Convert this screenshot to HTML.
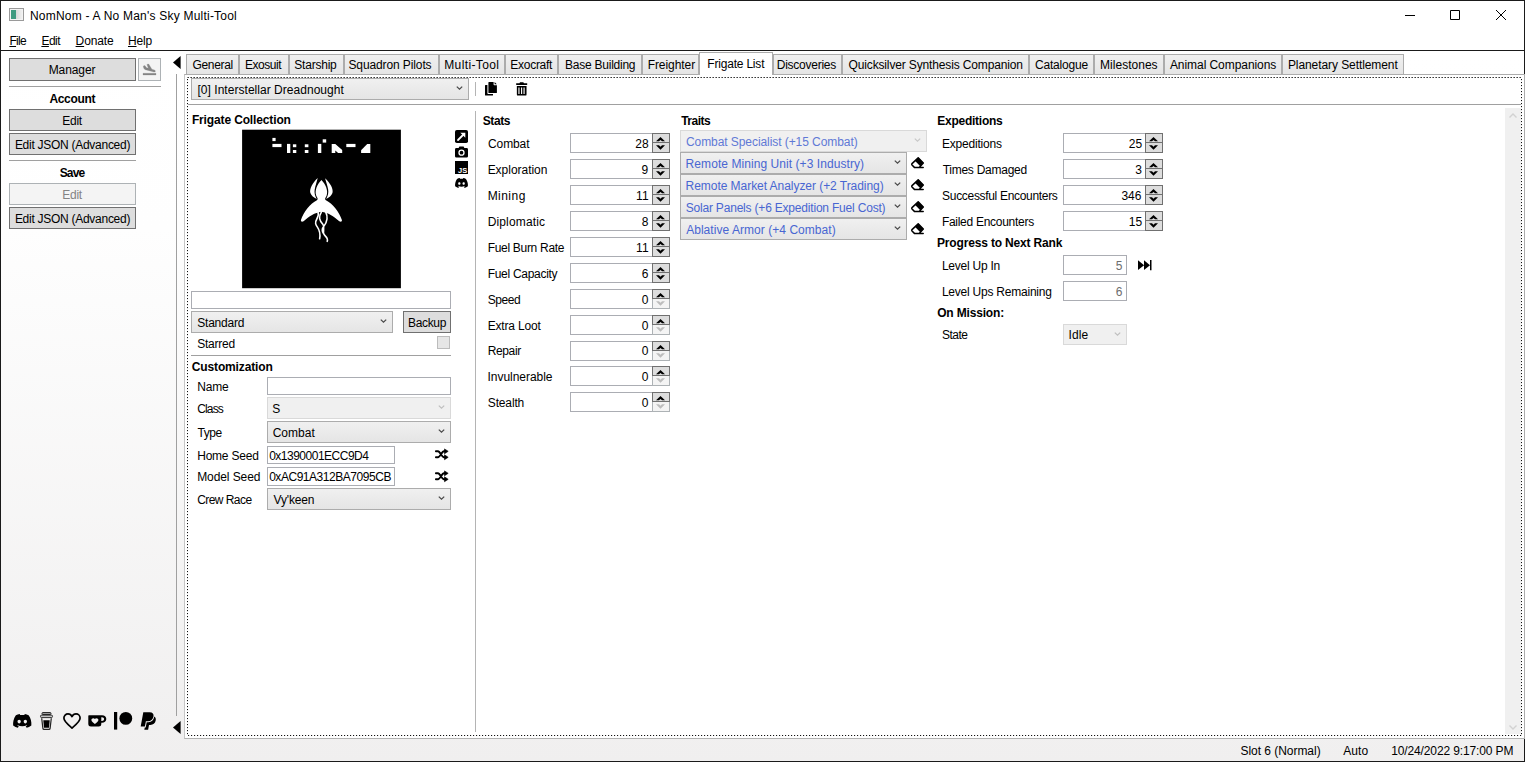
<!DOCTYPE html>
<html lang="en"><head><meta charset="utf-8"><title>NomNom - A No Man's Sky Multi-Tool</title>
<style>
html,body{margin:0;padding:0;}
body{width:1525px;height:762px;overflow:hidden;background:#fff;font-family:"Liberation Sans",sans-serif;font-size:12px;color:#000;}
#win{position:relative;width:1525px;height:762px;overflow:hidden;background:#fff;}
#win *{box-sizing:border-box;}
.a{position:absolute;}
.t{position:absolute;white-space:nowrap;line-height:14px;}
.t u{text-decoration:underline;text-underline-offset:1px;}
#bg{left:1px;top:51px;width:1523px;height:710px;background:linear-gradient(#fff 0%,#fefefe 25%,#f0efef 100%);}
.btn{position:absolute;background:#ddd;border:1px solid #707070;}
.btn.dis{background:#f4f4f4;border-color:#adb2b5;}
.cb{position:absolute;background:linear-gradient(#f0f0f0,#e5e5e5);border:1px solid #acacac;}
.cb.dis{background:#f0f0f0;border-color:#d9d9d9;}
.tb{position:absolute;background:#fff;border:1px solid #abadb3;}
.tab{position:absolute;top:54px;height:20px;background:linear-gradient(#f0f0f0,#e5e5e5);border:1px solid #acacac;border-bottom:none;}
.tab.sel{top:52px;height:23px;background:#fff;}
.hl{position:absolute;height:1px;background:#a0a0a0;}
.vl{position:absolute;width:1px;background:#a0a0a0;}
.sp{position:absolute;width:100px;height:20px;background:#fff;border:1px solid #abadb3;}
.sp i{position:absolute;right:-1px;width:18px;height:10px;background:#ddd;border:1px solid #707070;}
.sp i.u{top:-1px;}
.sp i.d{top:9px;border-top:none;}
.sp i.d.dis{background:#f4f4f4;border-color:#adb2b5;}
svg{position:absolute;overflow:visible;}
.dh{position:absolute;height:1px;background-image:linear-gradient(90deg,transparent 0,transparent 1px,#111 1px,#111 2px,rgba(0,0,0,.12) 2px,rgba(0,0,0,.12) 3px);background-size:3px 1px;}
.dh.top{background-image:linear-gradient(90deg,#8a8a8a 0,#8a8a8a 1px,#3a3a3a 1px,#3a3a3a 2px,transparent 2px,transparent 3px);}
.dv{position:absolute;width:1px;background-image:linear-gradient(180deg,transparent 0,transparent 1px,#111 1px,#111 2px,rgba(0,0,0,.12) 2px,rgba(0,0,0,.12) 3px);background-size:1px 3px;}

</style></head>
<body>
<div id="win">
<!-- window frame / chrome -->
<div class="a" id="bg"></div>
<div class="a" style="left:0;top:0;width:1525px;height:1px;background:#1a1a1a"></div>
<div class="a" style="left:0;top:0;width:1px;height:762px;background:#1a1a1a"></div>
<div class="a" style="left:1524px;top:0;width:1px;height:762px;background:#1a1a1a"></div>
<div class="a" style="left:0;top:761px;width:1525px;height:1px;background:#1a1a1a"></div>
<div class="a" style="left:0;top:50px;width:1525px;height:1px;background:#1a1a1a"></div>
<div class="a" style="left:9px;top:8px;width:15px;height:13px;border:1px solid #9a9a9a;background:linear-gradient(90deg,#3f9a80 0,#3f9a80 6px,#d8d8d8 6px,#f4f4f4 100%);box-shadow:inset 0 0 0 1px #f3f3f3"></div>
<svg style="left:1404px;top:10px" width="104" height="11" viewBox="0 0 104 11"><path d="M1 5.5H11M46.5 0.5H55.5V9.5H46.5ZM92 0L102 10M102 0L92 10" fill="none" stroke="#000" stroke-width="1"/></svg>
<!-- sidebar -->
<div class="btn" style="left:9px;top:58px;width:127px;height:23px;"></div>
<div class="btn dis" style="left:138px;top:58px;width:23px;height:23px;"></div>
<svg style="left:143px;top:64px" width="13" height="11" viewBox="0 0 13 11"><path d="M0.3 2 L1.9 1.6 L3.3 3.6 L5.4 4.2 L3.9 0.4 L5.7 0 L8.9 5.2 L11.3 5.9 C13 6.5 12.6 8.3 10.9 8 L2.4 5.7 C1.2 5.3 0.5 4.3 0.3 2Z M0 9.3H13V11H0Z" fill="#858585" stroke="#858585" stroke-width="0.25" stroke-linejoin="round"/></svg>
<div class="hl" style="left:9px;top:86px;width:152px"></div>
<div class="btn" style="left:9px;top:109px;width:127px;height:22px;"></div>
<div class="btn" style="left:9px;top:133px;width:127px;height:22px;"></div>
<div class="hl" style="left:9px;top:160px;width:127px"></div>
<div class="btn dis" style="left:9px;top:183px;width:127px;height:22px;"></div>
<div class="btn" style="left:9px;top:207px;width:127px;height:22px;"></div>
<svg style="left:173px;top:56px" width="8" height="13" viewBox="0 0 8 13"><path d="M0 6.5L7.6 0V13Z" fill="#000"/></svg>
<svg style="left:173px;top:721px" width="8" height="13" viewBox="0 0 8 13"><path d="M0 6.5L7.6 0V13Z" fill="#000"/></svg>
<div class="vl" style="left:176px;top:74px;height:642px"></div>
<!-- tab strip -->
<div class="a" style="left:184px;top:74px;width:1341px;height:665px;background:#fff;border:1px solid #acacac;border-left-color:#c6c6c6;border-bottom-color:#b2b2b2"></div>
<div class="tab" style="left:186px;width:53px"></div>
<div class="tab" style="left:239px;width:50px"></div>
<div class="tab" style="left:289px;width:55px"></div>
<div class="tab" style="left:344px;width:95px"></div>
<div class="tab" style="left:439px;width:66px"></div>
<div class="tab" style="left:505px;width:53px"></div>
<div class="tab" style="left:558px;width:84px"></div>
<div class="tab" style="left:642px;width:57px"></div>
<div class="tab" style="left:773px;width:69px"></div>
<div class="tab" style="left:842px;width:187px"></div>
<div class="tab" style="left:1029px;width:65px"></div>
<div class="tab" style="left:1094px;width:70px"></div>
<div class="tab" style="left:1164px;width:118px"></div>
<div class="tab" style="left:1282px;width:122px"></div>
<div class="tab sel" style="left:699px;width:74px"></div>
<div class="dh top" style="left:187px;top:77px;width:1335px"></div>
<div class="dh" style="left:187px;top:735px;width:1335px"></div>
<div class="dv" style="left:187px;top:78px;height:657px"></div>
<div class="dv" style="left:1521px;top:78px;height:657px"></div>
<!-- toolbar -->
<div class="cb" style="left:191px;top:78px;width:278px;height:22px;"><svg style="left:263.9px;top:7.10px" width="7" height="4" viewBox="0 0 7 4"><path d="M0.8 0.6 L3.5 3.2 L6.2 0.6" fill="none" stroke="#484848" stroke-width="1.25"/></svg></div>
<div class="vl" style="left:475px;top:82px;height:14px;background:#b4b4b4"></div>
<svg style="left:485px;top:82px" width="12" height="14" viewBox="0 0 12 14"><path d="M0 3.6 Q0 3 0.6 3 H2.4 V11.2 Q2.4 12 3.2 12 H8 V13 Q8 13.6 7.4 13.6 H0.6 Q0 13.6 0 13Z" fill="#000"/><path d="M3.4 0.6 Q3.4 0 4 0 H8.6 V2.6 Q8.6 3.3 9.3 3.3 H11.9 V10.4 Q11.9 11 11.3 11 H4 Q3.4 11 3.4 10.4Z M9.6 0.1 L11.8 2.3 H9.6Z" fill="#000"/></svg>
<svg style="left:515.6px;top:82px" width="11.4" height="14" viewBox="0 0 12 14" preserveAspectRatio="none"><path d="M0.2 1.2 H3.6 L4.3 0.2 H7.7 L8.4 1.2 H11.8 V2.9 H0.2Z" fill="#000"/><path fill-rule="evenodd" d="M0.9 3.9 H11.1 V12.4 Q11.1 13.6 9.9 13.6 H2.1 Q0.9 13.6 0.9 12.4Z M2.5 5.4 V11.9 H3.7 V5.4Z M5.3 5.4 V11.9 H6.5 V5.4Z M7.9 5.4 V11.9 H9.1 V5.4Z" fill="#000"/></svg>
<div class="hl" style="left:188px;top:104px;width:1333px"></div>
<div class="a" style="left:1505px;top:108px;width:16px;height:626px;background:#f0f0f0"></div>
<svg style="left:1509px;top:113px" width="8" height="5" viewBox="0 0 8 5"><path d="M0.5 4.5L4 1L7.5 4.5" fill="none" stroke="#d2d2d2" stroke-width="1.4"/></svg>
<svg style="left:1509px;top:725px" width="8" height="5" viewBox="0 0 8 5"><path d="M0.5 0.5L4 4L7.5 0.5" fill="none" stroke="#d2d2d2" stroke-width="1.4"/></svg>
<!-- frigate collection column -->
<svg style="left:242px;top:129px" width="160" height="160" viewBox="0 0 160 160"><rect x="0.1" y="0.7" width="158.8" height="158.5" fill="#000"/><g fill="#fff" transform="translate(0,1)"><rect x="30.4" y="7.9" width="3.2" height="3.2"/><rect x="30.4" y="13.9" width="9.1" height="3.2"/><rect x="45" y="13.9" width="3.3" height="9.1"/><rect x="50.9" y="14.3" width="3.4" height="2.9"/><rect x="50.9" y="20" width="3.4" height="3"/><rect x="62.8" y="14.3" width="3.6" height="2.9"/><rect x="62.8" y="20" width="3.6" height="3"/><rect x="75.9" y="13.9" width="3.4" height="9.1"/><rect x="80.7" y="9.3" width="3.5" height="3.3"/><path d="M89.7 13.9H93.3L100.2 19.9V23H96.1L93.3 20.4V23H89.7Z"/><rect x="104.3" y="13.9" width="9.2" height="3.2"/><path d="M119.1 23H128.3V13.9H125.2L119.1 20.3Z"/></g></svg>
<svg style="left:281px;top:170px" width="80" height="80" viewBox="0 0 762 762"><path d="M385 96 C345 135 318 200 336 245 C344 264 358 276 342 288 C280 318 215 400 190 476 C187 492 200 496 215 488 C270 440 320 408 385 398 C450 408 500 440 555 488 C570 496 583 492 580 476 C555 400 490 318 428 288 C412 276 426 264 434 245 C452 200 425 135 385 96Z" fill="#fff"/><path d="M350 76 C302 122 268 180 280 220 C288 246 312 262 340 276 C322 244 316 215 321 185 C327 150 340 115 350 76Z M420 78 C468 122 502 180 490 220 C482 246 458 262 430 276 C448 244 454 215 449 185 C443 150 430 115 420 78Z" fill="#fff"/><path d="M352 398 C372 450 322 470 330 510 C338 550 385 560 368 655 M385 398 C355 450 365 480 400 520 C425 550 385 590 415 620 C440 645 450 660 440 680 M425 398 C452 450 445 490 405 540 C385 565 395 590 405 605" fill="none" stroke="#fff" stroke-width="15" stroke-linecap="round"/></svg>
<svg style="left:455px;top:130px" width="13" height="13" viewBox="0 0 13 13"><rect width="13" height="13" rx="1.8" fill="#000"/><path d="M3 10 L8 5" fill="none" stroke="#fff" stroke-width="1.8" stroke-linecap="round"/><path d="M5.3 2.7 H10.3 V7.7Z" fill="#fff"/></svg>
<svg style="left:455px;top:146px" width="13" height="12" viewBox="0 0 13 12"><path d="M1.4 2H3.6L4.4 0.5H8.6L9.4 2H11.6Q13 2 13 3.4V10.2Q13 11.6 11.6 11.6H1.4Q0 11.6 0 10.2V3.4Q0 2 1.4 2Z" fill="#000"/><circle cx="6.5" cy="6.7" r="2.5" fill="none" stroke="#fff" stroke-width="1.3"/></svg>
<svg style="left:455px;top:161px" width="13" height="13" viewBox="0 0 13 13"><rect width="13" height="13" fill="#000"/><text x="12.3" y="11.6" text-anchor="end" font-family="Liberation Sans, sans-serif" font-size="7.5" font-weight="bold" fill="#fff">JS</text></svg>
<svg style="left:455px;top:178px" width="13" height="10" viewBox="0 0 18 14" preserveAspectRatio="none"><path fill-rule="evenodd" d="M15.2 1.3 C14 0.75 12.8 0.35 11.5 0.1 C11.35 0.4 11.15 0.8 11.05 1.1 C9.7 0.9 8.3 0.9 6.95 1.1 C6.85 0.8 6.65 0.4 6.5 0.1 C5.2 0.35 4 0.75 2.8 1.3 C0.5 4.8 -0.15 8.2 0.15 11.55 C1.7 12.7 3.2 13.4 4.7 13.85 C5.05 13.35 5.4 12.8 5.65 12.25 C5.1 12.05 4.6 11.8 4.1 11.5 C4.25 11.4 4.35 11.3 4.5 11.2 C7.4 12.55 10.6 12.55 13.5 11.2 C13.65 11.3 13.75 11.4 13.9 11.5 C13.4 11.8 12.9 12.05 12.35 12.25 C12.6 12.8 12.95 13.35 13.3 13.85 C14.8 13.4 16.3 12.7 17.85 11.55 C18.2 7.65 17.25 4.3 15.2 1.3Z M6 9.4 C5.1 9.4 4.4 8.6 4.4 7.6 C4.4 6.6 5.1 5.8 6 5.8 C6.9 5.8 7.65 6.6 7.6 7.6 C7.6 8.6 6.9 9.4 6 9.4Z M12 9.4 C11.1 9.4 10.4 8.6 10.4 7.6 C10.4 6.6 11.1 5.8 12 5.8 C12.9 5.8 13.65 6.6 13.6 7.6 C13.6 8.6 12.9 9.4 12 9.4Z" fill="#000"/></svg>
<div class="tb" style="left:191px;top:291px;width:260px;height:18px;"></div>
<div class="cb" style="left:191px;top:311px;width:202px;height:22px;"><svg style="left:187.9px;top:7.10px" width="7" height="4" viewBox="0 0 7 4"><path d="M0.8 0.6 L3.5 3.2 L6.2 0.6" fill="none" stroke="#484848" stroke-width="1.25"/></svg></div>
<div class="btn" style="left:403px;top:311px;width:48px;height:22px;"></div>
<div class="a" style="left:437px;top:336px;width:13px;height:13px;background:#e6e6e6;border:1px solid #bcbcbc"></div>
<div class="hl" style="left:191px;top:355px;width:260px"></div>
<div class="tb" style="left:267px;top:377px;width:184px;height:18px;"></div>
<div class="cb dis" style="left:267px;top:397px;width:184px;height:22px;"><svg style="left:169.9px;top:7.10px" width="7" height="4" viewBox="0 0 7 4"><path d="M0.8 0.6 L3.5 3.2 L6.2 0.6" fill="none" stroke="#bfbfbf" stroke-width="1.25"/></svg></div>
<div class="cb" style="left:267px;top:421px;width:184px;height:22px;"><svg style="left:169.9px;top:7.10px" width="7" height="4" viewBox="0 0 7 4"><path d="M0.8 0.6 L3.5 3.2 L6.2 0.6" fill="none" stroke="#484848" stroke-width="1.25"/></svg></div>
<div class="tb" style="left:267px;top:446px;width:128px;height:18px;"></div>
<div class="tb" style="left:267px;top:467px;width:128px;height:19px;"></div>
<div class="cb" style="left:267px;top:488px;width:184px;height:22px;"><svg style="left:169.9px;top:7.10px" width="7" height="4" viewBox="0 0 7 4"><path d="M0.8 0.6 L3.5 3.2 L6.2 0.6" fill="none" stroke="#484848" stroke-width="1.25"/></svg></div>
<svg style="left:435px;top:449.3px" width="13.5" height="10.5" viewBox="0 0 13.5 10.5"><path d="M0.9 2.3 H3 C5 2.3 6.9 8.3 8.9 8.3 H10 M0.9 8.3 H3 C5 8.3 6.9 2.3 8.9 2.3 H10" fill="none" stroke="#000" stroke-width="1.9" stroke-linecap="round"/><path d="M9.5 -0.1 L13.2 2.3 L9.5 4.8Z M9.5 5.8 L13.2 8.3 L9.5 10.7Z" fill="#000" stroke="#000" stroke-width="0.6" stroke-linejoin="round"/></svg>
<svg style="left:435px;top:471.3px" width="13.5" height="10.5" viewBox="0 0 13.5 10.5"><path d="M0.9 2.3 H3 C5 2.3 6.9 8.3 8.9 8.3 H10 M0.9 8.3 H3 C5 8.3 6.9 2.3 8.9 2.3 H10" fill="none" stroke="#000" stroke-width="1.9" stroke-linecap="round"/><path d="M9.5 -0.1 L13.2 2.3 L9.5 4.8Z M9.5 5.8 L13.2 8.3 L9.5 10.7Z" fill="#000" stroke="#000" stroke-width="0.6" stroke-linejoin="round"/></svg>
<div class="vl" style="left:475px;top:111px;height:621px;background:#b4b4b4"></div>
<!-- stats spinners -->
<div class="sp" style="left:570px;top:133px"><i class="u"><svg style="left:3px;top:3px" width="9" height="5" viewBox="0 0 9 5"><path d="M0 4.3 L4.5 0 L9 4.3 H6 L4.5 2.9 L3 4.3Z" fill="#000"/></svg></i><i class="d"><svg style="left:3px;top:2px" width="9" height="5" viewBox="0 0 9 5"><path d="M0 0.2 L4.5 4.8 L9 0.2 H6 L4.5 1.8 L3 0.2Z" fill="#000"/></svg></i></div>
<div class="sp" style="left:570px;top:159px"><i class="u"><svg style="left:3px;top:3px" width="9" height="5" viewBox="0 0 9 5"><path d="M0 4.3 L4.5 0 L9 4.3 H6 L4.5 2.9 L3 4.3Z" fill="#000"/></svg></i><i class="d"><svg style="left:3px;top:2px" width="9" height="5" viewBox="0 0 9 5"><path d="M0 0.2 L4.5 4.8 L9 0.2 H6 L4.5 1.8 L3 0.2Z" fill="#000"/></svg></i></div>
<div class="sp" style="left:570px;top:185px"><i class="u"><svg style="left:3px;top:3px" width="9" height="5" viewBox="0 0 9 5"><path d="M0 4.3 L4.5 0 L9 4.3 H6 L4.5 2.9 L3 4.3Z" fill="#000"/></svg></i><i class="d"><svg style="left:3px;top:2px" width="9" height="5" viewBox="0 0 9 5"><path d="M0 0.2 L4.5 4.8 L9 0.2 H6 L4.5 1.8 L3 0.2Z" fill="#000"/></svg></i></div>
<div class="sp" style="left:570px;top:211px"><i class="u"><svg style="left:3px;top:3px" width="9" height="5" viewBox="0 0 9 5"><path d="M0 4.3 L4.5 0 L9 4.3 H6 L4.5 2.9 L3 4.3Z" fill="#000"/></svg></i><i class="d"><svg style="left:3px;top:2px" width="9" height="5" viewBox="0 0 9 5"><path d="M0 0.2 L4.5 4.8 L9 0.2 H6 L4.5 1.8 L3 0.2Z" fill="#000"/></svg></i></div>
<div class="sp" style="left:570px;top:237px"><i class="u"><svg style="left:3px;top:3px" width="9" height="5" viewBox="0 0 9 5"><path d="M0 4.3 L4.5 0 L9 4.3 H6 L4.5 2.9 L3 4.3Z" fill="#000"/></svg></i><i class="d"><svg style="left:3px;top:2px" width="9" height="5" viewBox="0 0 9 5"><path d="M0 0.2 L4.5 4.8 L9 0.2 H6 L4.5 1.8 L3 0.2Z" fill="#000"/></svg></i></div>
<div class="sp" style="left:570px;top:263px"><i class="u"><svg style="left:3px;top:3px" width="9" height="5" viewBox="0 0 9 5"><path d="M0 4.3 L4.5 0 L9 4.3 H6 L4.5 2.9 L3 4.3Z" fill="#000"/></svg></i><i class="d"><svg style="left:3px;top:2px" width="9" height="5" viewBox="0 0 9 5"><path d="M0 0.2 L4.5 4.8 L9 0.2 H6 L4.5 1.8 L3 0.2Z" fill="#000"/></svg></i></div>
<div class="sp" style="left:570px;top:289px"><i class="u"><svg style="left:3px;top:3px" width="9" height="5" viewBox="0 0 9 5"><path d="M0 4.3 L4.5 0 L9 4.3 H6 L4.5 2.9 L3 4.3Z" fill="#000"/></svg></i><i class="d dis"><svg style="left:3px;top:2px" width="9" height="5" viewBox="0 0 9 5"><path d="M0 0.2 L4.5 4.8 L9 0.2 H6 L4.5 1.8 L3 0.2Z" fill="#bdbdbd"/></svg></i></div>
<div class="sp" style="left:570px;top:315px"><i class="u"><svg style="left:3px;top:3px" width="9" height="5" viewBox="0 0 9 5"><path d="M0 4.3 L4.5 0 L9 4.3 H6 L4.5 2.9 L3 4.3Z" fill="#000"/></svg></i><i class="d dis"><svg style="left:3px;top:2px" width="9" height="5" viewBox="0 0 9 5"><path d="M0 0.2 L4.5 4.8 L9 0.2 H6 L4.5 1.8 L3 0.2Z" fill="#bdbdbd"/></svg></i></div>
<div class="sp" style="left:570px;top:341px"><i class="u"><svg style="left:3px;top:3px" width="9" height="5" viewBox="0 0 9 5"><path d="M0 4.3 L4.5 0 L9 4.3 H6 L4.5 2.9 L3 4.3Z" fill="#000"/></svg></i><i class="d dis"><svg style="left:3px;top:2px" width="9" height="5" viewBox="0 0 9 5"><path d="M0 0.2 L4.5 4.8 L9 0.2 H6 L4.5 1.8 L3 0.2Z" fill="#bdbdbd"/></svg></i></div>
<div class="sp" style="left:570px;top:366px"><i class="u"><svg style="left:3px;top:3px" width="9" height="5" viewBox="0 0 9 5"><path d="M0 4.3 L4.5 0 L9 4.3 H6 L4.5 2.9 L3 4.3Z" fill="#000"/></svg></i><i class="d dis"><svg style="left:3px;top:2px" width="9" height="5" viewBox="0 0 9 5"><path d="M0 0.2 L4.5 4.8 L9 0.2 H6 L4.5 1.8 L3 0.2Z" fill="#bdbdbd"/></svg></i></div>
<div class="sp" style="left:570px;top:392px"><i class="u"><svg style="left:3px;top:3px" width="9" height="5" viewBox="0 0 9 5"><path d="M0 4.3 L4.5 0 L9 4.3 H6 L4.5 2.9 L3 4.3Z" fill="#000"/></svg></i><i class="d dis"><svg style="left:3px;top:2px" width="9" height="5" viewBox="0 0 9 5"><path d="M0 0.2 L4.5 4.8 L9 0.2 H6 L4.5 1.8 L3 0.2Z" fill="#bdbdbd"/></svg></i></div>
<!-- traits -->
<div class="cb dis" style="left:680px;top:130px;width:247px;height:22px;"><svg style="left:232.9px;top:7.10px" width="7" height="4" viewBox="0 0 7 4"><path d="M0.8 0.6 L3.5 3.2 L6.2 0.6" fill="none" stroke="#c8c8c8" stroke-width="1.25"/></svg></div>
<div class="cb" style="left:680px;top:152px;width:227px;height:22px;"><svg style="left:212.9px;top:7.10px" width="7" height="4" viewBox="0 0 7 4"><path d="M0.8 0.6 L3.5 3.2 L6.2 0.6" fill="none" stroke="#484848" stroke-width="1.25"/></svg></div>
<svg style="left:911px;top:157.2px" width="13.5" height="11.5" viewBox="0 0 13.5 11.5"><path d="M7.2 0.5 L12.6 5.9 L9.3 9.3 L3.9 3.8Z" fill="#000"/><path d="M7.2 0.9 L12.3 6 L8.2 10.4 H3.4 L1 8 Q0.4 7.3 1 6.6Z M8.2 10.4 H12.2" fill="none" stroke="#000" stroke-width="1.5" stroke-linejoin="round" stroke-linecap="round"/></svg>
<div class="cb" style="left:680px;top:174px;width:227px;height:22px;"><svg style="left:212.9px;top:7.10px" width="7" height="4" viewBox="0 0 7 4"><path d="M0.8 0.6 L3.5 3.2 L6.2 0.6" fill="none" stroke="#484848" stroke-width="1.25"/></svg></div>
<svg style="left:911px;top:179.2px" width="13.5" height="11.5" viewBox="0 0 13.5 11.5"><path d="M7.2 0.5 L12.6 5.9 L9.3 9.3 L3.9 3.8Z" fill="#000"/><path d="M7.2 0.9 L12.3 6 L8.2 10.4 H3.4 L1 8 Q0.4 7.3 1 6.6Z M8.2 10.4 H12.2" fill="none" stroke="#000" stroke-width="1.5" stroke-linejoin="round" stroke-linecap="round"/></svg>
<div class="cb" style="left:680px;top:196px;width:227px;height:22px;"><svg style="left:212.9px;top:7.10px" width="7" height="4" viewBox="0 0 7 4"><path d="M0.8 0.6 L3.5 3.2 L6.2 0.6" fill="none" stroke="#484848" stroke-width="1.25"/></svg></div>
<svg style="left:911px;top:201.2px" width="13.5" height="11.5" viewBox="0 0 13.5 11.5"><path d="M7.2 0.5 L12.6 5.9 L9.3 9.3 L3.9 3.8Z" fill="#000"/><path d="M7.2 0.9 L12.3 6 L8.2 10.4 H3.4 L1 8 Q0.4 7.3 1 6.6Z M8.2 10.4 H12.2" fill="none" stroke="#000" stroke-width="1.5" stroke-linejoin="round" stroke-linecap="round"/></svg>
<div class="cb" style="left:680px;top:218px;width:227px;height:22px;"><svg style="left:212.9px;top:7.10px" width="7" height="4" viewBox="0 0 7 4"><path d="M0.8 0.6 L3.5 3.2 L6.2 0.6" fill="none" stroke="#484848" stroke-width="1.25"/></svg></div>
<svg style="left:911px;top:223.2px" width="13.5" height="11.5" viewBox="0 0 13.5 11.5"><path d="M7.2 0.5 L12.6 5.9 L9.3 9.3 L3.9 3.8Z" fill="#000"/><path d="M7.2 0.9 L12.3 6 L8.2 10.4 H3.4 L1 8 Q0.4 7.3 1 6.6Z M8.2 10.4 H12.2" fill="none" stroke="#000" stroke-width="1.5" stroke-linejoin="round" stroke-linecap="round"/></svg>
<!-- expeditions -->
<div class="sp" style="left:1063px;top:133px"><i class="u"><svg style="left:3px;top:3px" width="9" height="5" viewBox="0 0 9 5"><path d="M0 4.3 L4.5 0 L9 4.3 H6 L4.5 2.9 L3 4.3Z" fill="#000"/></svg></i><i class="d"><svg style="left:3px;top:2px" width="9" height="5" viewBox="0 0 9 5"><path d="M0 0.2 L4.5 4.8 L9 0.2 H6 L4.5 1.8 L3 0.2Z" fill="#000"/></svg></i></div>
<div class="sp" style="left:1063px;top:159px"><i class="u"><svg style="left:3px;top:3px" width="9" height="5" viewBox="0 0 9 5"><path d="M0 4.3 L4.5 0 L9 4.3 H6 L4.5 2.9 L3 4.3Z" fill="#000"/></svg></i><i class="d"><svg style="left:3px;top:2px" width="9" height="5" viewBox="0 0 9 5"><path d="M0 0.2 L4.5 4.8 L9 0.2 H6 L4.5 1.8 L3 0.2Z" fill="#000"/></svg></i></div>
<div class="sp" style="left:1063px;top:185px"><i class="u"><svg style="left:3px;top:3px" width="9" height="5" viewBox="0 0 9 5"><path d="M0 4.3 L4.5 0 L9 4.3 H6 L4.5 2.9 L3 4.3Z" fill="#000"/></svg></i><i class="d"><svg style="left:3px;top:2px" width="9" height="5" viewBox="0 0 9 5"><path d="M0 0.2 L4.5 4.8 L9 0.2 H6 L4.5 1.8 L3 0.2Z" fill="#000"/></svg></i></div>
<div class="sp" style="left:1063px;top:211px"><i class="u"><svg style="left:3px;top:3px" width="9" height="5" viewBox="0 0 9 5"><path d="M0 4.3 L4.5 0 L9 4.3 H6 L4.5 2.9 L3 4.3Z" fill="#000"/></svg></i><i class="d"><svg style="left:3px;top:2px" width="9" height="5" viewBox="0 0 9 5"><path d="M0 0.2 L4.5 4.8 L9 0.2 H6 L4.5 1.8 L3 0.2Z" fill="#000"/></svg></i></div>
<div class="tb" style="left:1063px;top:255px;width:64px;height:20px;"></div>
<div class="tb" style="left:1063px;top:281px;width:64px;height:20px;"></div>
<svg style="left:1138px;top:259.6px" width="13.5" height="10.3" viewBox="0 0 13.5 9.6" preserveAspectRatio="none"><path d="M0 0.3 L6.1 4.8 L0 9.3Z M6 0.3 L12 4.8 L6 9.3Z M12 0 H13.5 V9.6 H12Z" fill="#000"/></svg>
<div class="cb dis" style="left:1063px;top:324px;width:64px;height:21px;"><svg style="left:49.9px;top:6.60px" width="7" height="4" viewBox="0 0 7 4"><path d="M0.8 0.6 L3.5 3.2 L6.2 0.6" fill="none" stroke="#bfbfbf" stroke-width="1.25"/></svg></div>
<!-- donation icons -->
<svg style="left:12.5px;top:714px" width="18.5" height="14" viewBox="0 0 18 14" preserveAspectRatio="none"><path fill-rule="evenodd" d="M15.2 1.3 C14 0.75 12.8 0.35 11.5 0.1 C11.35 0.4 11.15 0.8 11.05 1.1 C9.7 0.9 8.3 0.9 6.95 1.1 C6.85 0.8 6.65 0.4 6.5 0.1 C5.2 0.35 4 0.75 2.8 1.3 C0.5 4.8 -0.15 8.2 0.15 11.55 C1.7 12.7 3.2 13.4 4.7 13.85 C5.05 13.35 5.4 12.8 5.65 12.25 C5.1 12.05 4.6 11.8 4.1 11.5 C4.25 11.4 4.35 11.3 4.5 11.2 C7.4 12.55 10.6 12.55 13.5 11.2 C13.65 11.3 13.75 11.4 13.9 11.5 C13.4 11.8 12.9 12.05 12.35 12.25 C12.6 12.8 12.95 13.35 13.3 13.85 C14.8 13.4 16.3 12.7 17.85 11.55 C18.2 7.65 17.25 4.3 15.2 1.3Z M6 9.4 C5.1 9.4 4.4 8.6 4.4 7.6 C4.4 6.6 5.1 5.8 6 5.8 C6.9 5.8 7.65 6.6 7.6 7.6 C7.6 8.6 6.9 9.4 6 9.4Z M12 9.4 C11.1 9.4 10.4 8.6 10.4 7.6 C10.4 6.6 11.1 5.8 12 5.8 C12.9 5.8 13.65 6.6 13.6 7.6 C13.6 8.6 12.9 9.4 12 9.4Z" fill="#000"/></svg>
<svg style="left:40.3px;top:712px" width="13" height="18" viewBox="0 0 13 18"><rect x="2" y="0.5" width="9" height="2" rx="0.9" fill="#9a9a9a" stroke="#1c1c1c" stroke-width="0.9"/><rect x="0.5" y="3.1" width="12" height="2.5" rx="1.1" fill="#c4c4c4" stroke="#1c1c1c" stroke-width="0.9"/><path d="M1.7 6.3 L2.9 16.4 Q3 17.4 4 17.4 H9 Q10 17.4 10.1 16.4 L11.3 6.3" fill="none" stroke="#222" stroke-width="1.2"/><path d="M3.3 8.3 H9.7 L9 15.8 H4Z" fill="#000"/></svg>
<svg style="left:63.3px;top:712.7px" width="18" height="16" viewBox="0 0 18 16"><path d="M9 15 C5 11.6 0.9 8.6 0.9 5.1 C0.9 2.6 2.8 0.9 5 0.9 C6.7 0.9 8.2 1.9 9 3.6 C9.8 1.9 11.3 0.9 13 0.9 C15.2 0.9 17.1 2.6 17.1 5.1 C17.1 8.6 13 11.6 9 15Z" fill="none" stroke="#000" stroke-width="1.7" stroke-linejoin="round"/></svg>
<svg style="left:88.4px;top:714.8px" width="18.5" height="11.8" viewBox="0 0 18.5 13.5" preserveAspectRatio="none"><path fill-rule="evenodd" d="M0.3 1 Q0.3 0.3 1 0.3 H14 C16.6 0.3 18.3 2.2 18.3 4.6 C18.3 7.2 16.4 9 14 9 H13.3 V10.6 Q13.3 13.2 10.7 13.2 H2.9 Q0.3 13.2 0.3 10.6Z M13.3 2.5 V6.8 H14 C15.2 6.8 16.1 5.9 16.1 4.6 C16.1 3.4 15.2 2.5 14 2.5Z M6.9 10.3 C5.2 8.8 3.4 7.5 3.4 5.7 C3.4 4.5 4.3 3.7 5.3 3.7 C6 3.7 6.6 4.1 6.9 4.6 C7.2 4.1 7.8 3.7 8.5 3.7 C9.5 3.7 10.4 4.5 10.4 5.7 C10.4 7.5 8.6 8.8 6.9 10.3Z" fill="#000"/></svg>
<svg style="left:113.8px;top:712px" width="18.5" height="17.6" viewBox="0 0 18.5 17.6"><rect x="0" y="0" width="3.2" height="17.6" fill="#000"/><circle cx="11.8" cy="6.4" r="6.4" fill="#000"/></svg>
<svg style="left:140.4px;top:711.9px" width="16" height="18" viewBox="0 0 16 18"><path d="M3.3 0.2 H9.6 C12.6 0.2 14 2 13.5 4.6 C12.9 7.8 10.8 9.3 7.9 9.3 H5.9 L4.9 14.6 H0.7Z" fill="#000"/><path d="M14.3 4.6 C15.7 5.5 16 7 15.7 8.6 C15.1 11.6 13.1 12.9 10.4 12.9 H9 L8.1 17.8 H4.3 L4.8 15.4 H5.7 L6.7 10.2 H8.4 C11.5 10.2 13.7 8.4 14.3 4.6Z" fill="#000"/></svg>

<!-- text labels -->
<span class="t" style="left:29.90px;top:9px;letter-spacing:0.218px;">NomNom - A No Man's Sky Multi-Tool</span>
<span class="t" style="left:9.39px;top:34px;letter-spacing:-0.652px;"><u>F</u>ile</span>
<span class="t" style="left:41.39px;top:34px;letter-spacing:-0.493px;"><u>E</u>dit</span>
<span class="t" style="left:75.59px;top:34px;letter-spacing:-0.112px;"><u>D</u>onate</span>
<span class="t" style="left:128.00px;top:34px;letter-spacing:-0.133px;"><u>H</u>elp</span>
<span class="t" style="left:48.65px;top:63px;letter-spacing:-0.075px;">Manager</span>
<span class="t" style="left:49.38px;top:92px;font-weight:bold;letter-spacing:-0.301px;">Account</span>
<span class="t" style="left:62.33px;top:114px;letter-spacing:-0.273px;">Edit</span>
<span class="t" style="left:14.90px;top:138px;letter-spacing:-0.274px;">Edit JSON (Advanced)</span>
<span class="t" style="left:59.66px;top:166px;font-weight:bold;letter-spacing:-0.848px;">Save</span>
<span class="t" style="left:62.33px;top:188px;color:#838383;letter-spacing:-0.273px;">Edit</span>
<span class="t" style="left:14.90px;top:212px;letter-spacing:-0.274px;">Edit JSON (Advanced)</span>
<span class="t" style="left:192.52px;top:58px;letter-spacing:-0.339px;">General</span>
<span class="t" style="left:244.90px;top:58px;letter-spacing:-0.432px;">Exosuit</span>
<span class="t" style="left:294.32px;top:58px;letter-spacing:-0.223px;">Starship</span>
<span class="t" style="left:348.44px;top:58px;letter-spacing:-0.110px;">Squadron Pilots</span>
<span class="t" style="left:444.19px;top:58px;letter-spacing:0.384px;">Multi-Tool</span>
<span class="t" style="left:510.33px;top:58px;letter-spacing:-0.282px;">Exocraft</span>
<span class="t" style="left:565.08px;top:58px;letter-spacing:-0.247px;">Base Building</span>
<span class="t" style="left:647.65px;top:58px;letter-spacing:-0.056px;">Freighter</span>
<span class="t" style="left:707.33px;top:57px;letter-spacing:-0.201px;">Frigate List</span>
<span class="t" style="left:776.75px;top:58px;letter-spacing:-0.247px;">Discoveries</span>
<span class="t" style="left:848.56px;top:58px;letter-spacing:-0.145px;">Quicksilver Synthesis Companion</span>
<span class="t" style="left:1035.04px;top:58px;letter-spacing:-0.196px;">Catalogue</span>
<span class="t" style="left:1100.07px;top:58px;letter-spacing:0.019px;">Milestones</span>
<span class="t" style="left:1169.93px;top:58px;letter-spacing:-0.060px;">Animal Companions</span>
<span class="t" style="left:1287.90px;top:58px;letter-spacing:-0.079px;">Planetary Settlement</span>
<span class="t" style="left:197.47px;top:83px;letter-spacing:0.035px;">[0] Interstellar Dreadnought</span>
<span class="t" style="left:191.88px;top:113px;font-weight:bold;letter-spacing:-0.134px;">Frigate Collection</span>
<span class="t" style="left:197.32px;top:316px;letter-spacing:-0.242px;">Standard</span>
<span class="t" style="left:408.08px;top:316px;letter-spacing:-0.356px;">Backup</span>
<span class="t" style="left:197.32px;top:337px;letter-spacing:-0.268px;">Starred</span>
<span class="t" style="left:191.82px;top:360px;font-weight:bold;letter-spacing:-0.144px;">Customization</span>
<span class="t" style="left:197.19px;top:380px;letter-spacing:-0.201px;">Name</span>
<span class="t" style="left:197.21px;top:402px;letter-spacing:-0.856px;">Class</span>
<span class="t" style="left:272.33px;top:402px;">S</span>
<span class="t" style="left:197.57px;top:426px;letter-spacing:-0.452px;">Type</span>
<span class="t" style="left:272.63px;top:426px;letter-spacing:0.035px;">Combat</span>
<span class="t" style="left:197.19px;top:449px;letter-spacing:-0.218px;">Home Seed</span>
<span class="t" style="left:269.16px;top:449px;letter-spacing:-0.498px;">0x1390001ECC9D4</span>
<span class="t" style="left:197.19px;top:470px;letter-spacing:-0.092px;">Model Seed</span>
<span class="t" style="left:269.16px;top:470px;letter-spacing:-0.462px;">0xAC91A312BA7095CB</span>
<span class="t" style="left:197.21px;top:493px;letter-spacing:-0.558px;">Crew Race</span>
<span class="t" style="left:273.51px;top:493px;letter-spacing:-0.138px;">Vy'keen</span>
<span class="t" style="left:482.80px;top:114px;font-weight:bold;letter-spacing:-0.428px;">Stats</span>
<span class="t" style="left:488.07px;top:137px;letter-spacing:-0.115px;">Combat</span>
<span class="t" style="left:635.31px;top:137px;">28</span>
<span class="t" style="left:487.65px;top:163px;letter-spacing:-0.024px;">Exploration</span>
<span class="t" style="left:641.57px;top:163px;">9</span>
<span class="t" style="left:487.65px;top:189px;letter-spacing:0.465px;">Mining</span>
<span class="t" style="left:636.12px;top:189px;">11</span>
<span class="t" style="left:487.65px;top:215px;letter-spacing:0.155px;">Diplomatic</span>
<span class="t" style="left:641.87px;top:215px;">8</span>
<span class="t" style="left:487.65px;top:241px;letter-spacing:-0.297px;">Fuel Burn Rate</span>
<span class="t" style="left:636.12px;top:241px;">11</span>
<span class="t" style="left:487.65px;top:267px;letter-spacing:-0.285px;">Fuel Capacity</span>
<span class="t" style="left:641.65px;top:267px;">6</span>
<span class="t" style="left:487.83px;top:293px;letter-spacing:-0.464px;">Speed</span>
<span class="t" style="left:641.81px;top:293px;">0</span>
<span class="t" style="left:487.65px;top:319px;letter-spacing:-0.175px;">Extra Loot</span>
<span class="t" style="left:641.81px;top:319px;">0</span>
<span class="t" style="left:487.65px;top:344px;letter-spacing:-0.346px;">Repair</span>
<span class="t" style="left:641.81px;top:344px;">0</span>
<span class="t" style="left:487.57px;top:370px;letter-spacing:-0.037px;">Invulnerable</span>
<span class="t" style="left:641.81px;top:370px;">0</span>
<span class="t" style="left:487.83px;top:396px;letter-spacing:-0.159px;">Stealth</span>
<span class="t" style="left:641.81px;top:396px;">0</span>
<span class="t" style="left:681.15px;top:114px;font-weight:bold;letter-spacing:-0.477px;">Traits</span>
<span class="t" style="left:685.94px;top:135px;color:#6079d6;letter-spacing:-0.069px;">Combat Specialist (+15 Combat)</span>
<span class="t" style="left:685.61px;top:157px;color:#4866d2;letter-spacing:0.065px;">Remote Mining Unit (+3 Industry)</span>
<span class="t" style="left:685.61px;top:179px;color:#4866d2;letter-spacing:-0.049px;">Remote Market Analyzer (+2 Trading)</span>
<span class="t" style="left:685.69px;top:201px;color:#4866d2;letter-spacing:-0.195px;">Solar Panels (+6 Expedition Fuel Cost)</span>
<span class="t" style="left:686.13px;top:223px;color:#4866d2;letter-spacing:0.047px;">Ablative Armor (+4 Combat)</span>
<span class="t" style="left:937.30px;top:114px;font-weight:bold;letter-spacing:-0.260px;">Expeditions</span>
<span class="t" style="left:941.90px;top:137px;letter-spacing:-0.193px;">Expeditions</span>
<span class="t" style="left:1128.87px;top:137px;">25</span>
<span class="t" style="left:942.68px;top:163px;letter-spacing:-0.259px;">Times Damaged</span>
<span class="t" style="left:1135.15px;top:163px;">3</span>
<span class="t" style="left:942.11px;top:189px;letter-spacing:-0.317px;">Successful Encounters</span>
<span class="t" style="left:1121.44px;top:189px;">346</span>
<span class="t" style="left:941.90px;top:215px;letter-spacing:-0.278px;">Failed Encounters</span>
<span class="t" style="left:1128.87px;top:215px;">15</span>
<span class="t" style="left:937.00px;top:236px;font-weight:bold;letter-spacing:-0.164px;">Progress to Next Rank</span>
<span class="t" style="left:941.90px;top:259px;letter-spacing:-0.238px;">Level Up In</span>
<span class="t" style="left:1115.78px;top:259px;color:#6d6d6d;">5</span>
<span class="t" style="left:941.90px;top:285px;letter-spacing:-0.223px;">Level Ups Remaining</span>
<span class="t" style="left:1115.79px;top:285px;color:#6d6d6d;">6</span>
<span class="t" style="left:937.19px;top:306px;font-weight:bold;letter-spacing:-0.172px;">On Mission:</span>
<span class="t" style="left:942.11px;top:328px;letter-spacing:-0.539px;">State</span>
<span class="t" style="left:1068.46px;top:328px;letter-spacing:0.109px;">Idle</span>
<span class="t" style="left:1240.44px;top:744px;letter-spacing:-0.035px;">Slot 6 (Normal)</span>
<span class="t" style="left:1343.24px;top:744px;letter-spacing:0.079px;">Auto</span>
<span class="t" style="left:1391.19px;top:744px;letter-spacing:-0.125px;">10/24/2022 9:17:00 PM</span>
</div>
</body></html>
